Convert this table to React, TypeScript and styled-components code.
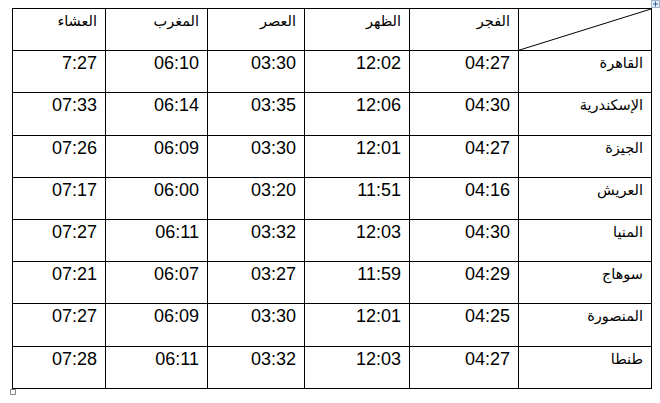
import React from "react";
import styled, { createGlobalStyle } from "styled-components";

const Global = createGlobalStyle`
  html, body { margin: 0; padding: 0; background: #fff; }
  body { width: 660px; height: 403px; overflow: hidden; position: relative; }
`;

const Page = styled.div`
  position: relative;
  padding: 8px 0 0 12px;
  width: 660px;
  height: 403px;
  box-sizing: border-box;
`;

const Table = styled.table`
  border-collapse: collapse;
  table-layout: fixed;
  width: 640px;
  direction: rtl;
`;

const Row = styled.tr`
  height: 42.2px;
`;

const Cell = styled.td<{ $ar?: boolean }>`
  position: relative;
  border: 1px solid #000;
  padding: ${(p) => (p.$ar ? "1px 8px 0 8px" : "2px 8px 0 8px")};
  vertical-align: top;
  text-align: right;
  color: #000;
  font-family: ${(p) => (p.$ar ? '"DejaVu Sans", sans-serif' : '"Liberation Sans", Arial, sans-serif')};
  font-size: ${(p) => (p.$ar ? "14.5px" : "18px")};
  line-height: ${(p) => (p.$ar ? "22px" : "21px")};
  white-space: nowrap;
`;

const Diagonal = styled.svg`
  position: absolute;
  inset: 0;
  width: 100%;
  height: 100%;
  display: block;
`;

const MoveHandle = styled.div`
  position: absolute;
  left: 651px;
  top: 0;
  width: 9px;
  height: 8px;
  box-sizing: border-box;
  border: 1px solid #9fb4cc;
  background: #e4ecf6;
`;

const ResizeHandle = styled.div`
  position: absolute;
  left: 10px;
  top: 389px;
  width: 6px;
  height: 6px;
  box-sizing: border-box;
  border: 1px solid #8a8a8a;
  background: #fff;
`;

const headers = ["الفجر", "الظهر", "العصر", "المغرب", "العشاء"];
const widths = [133, 109, 105, 97, 102, 93];

const data: [string, string[]][] = [
  ["القاهرة", ["04:27", "12:02", "03:30", "06:10", "7:27"]],
  ["الإسكندرية", ["04:30", "12:06", "03:35", "06:14", "07:33"]],
  ["الجيزة", ["04:27", "12:01", "03:30", "06:09", "07:26"]],
  ["العريش", ["04:16", "11:51", "03:20", "06:00", "07:17"]],
  ["المنيا", ["04:30", "12:03", "03:32", "06:11", "07:27"]],
  ["سوهاج", ["04:29", "11:59", "03:27", "06:07", "07:21"]],
  ["المنصورة", ["04:25", "12:01", "03:30", "06:09", "07:27"]],
  ["طنطا", ["04:27", "12:03", "03:32", "06:11", "07:28"]],
];

export default function App() {
  return (
    <>
      <Global />
      <Page>
        <Table>
          <colgroup>
            {widths.map((w, i) => (
              <col key={i} style={{ width: w }} />
            ))}
          </colgroup>
          <tbody>
            <Row>
              <Cell>
                <Diagonal viewBox="0 0 100 100" preserveAspectRatio="none">
                  <line
                    x1="0"
                    y1="100"
                    x2="100"
                    y2="0"
                    stroke="#000"
                    strokeWidth="1"
                    vectorEffect="non-scaling-stroke"
                  />
                </Diagonal>
              </Cell>
              {headers.map((h) => (
                <Cell key={h} $ar>
                  {h}
                </Cell>
              ))}
            </Row>
            {data.map(([city, times]) => (
              <Row key={city}>
                <Cell $ar>{city}</Cell>
                {times.map((t, i) => (
                  <Cell key={i}>{t}</Cell>
                ))}
              </Row>
            ))}
          </tbody>
        </Table>
        <MoveHandle>
          <svg width="7" height="6" viewBox="0 0 7 6" style={{ display: "block" }}>
            <path d="M3.5 0.5V5.5M1 3H6" stroke="#2f5f9a" strokeWidth="1" />
          </svg>
        </MoveHandle>
        <ResizeHandle />
      </Page>
    </>
  );
}
